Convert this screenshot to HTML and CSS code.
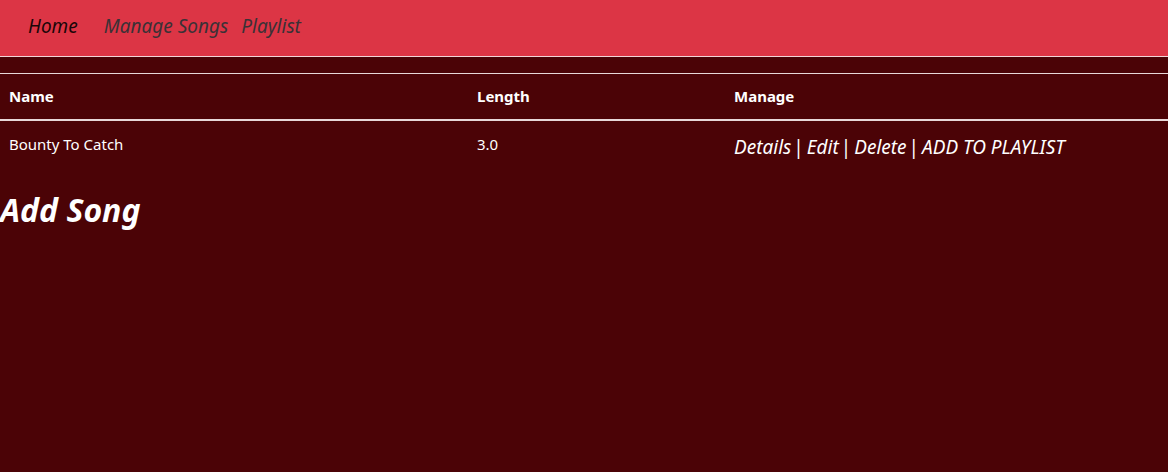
FILE: index.html
```html
<!DOCTYPE html>
<html>
<head>
<meta charset="utf-8">
<link rel="stylesheet" href="styles.css">
</head>
<body>
<nav class="navbar">
  <a class="nav-link active" href="#">Home</a>
  <a class="nav-link" href="#">Manage Songs</a>
  <a class="nav-link" href="#">Playlist</a>
</nav>
<main class="content">
  <table class="songs">
    <thead>
      <tr>
        <th class="col-name">Name</th>
        <th class="col-length">Length</th>
        <th class="col-manage">Manage</th>
      </tr>
    </thead>
    <tbody>
      <tr>
        <td>Bounty To Catch</td>
        <td>3.0</td>
        <td class="manage"><a href="#">Details</a><span class="sep">|</span><a href="#">Edit</a><span class="sep">|</span><a href="#">Delete</a><span class="sep">|</span><a href="#">ADD TO PLAYLIST</a></td>
      </tr>
    </tbody>
  </table>
  <h2 class="add-title">Add Song</h2>
</main>
</body>
</html>
```

FILE: styles.css
```css
html, body {
  margin: 0;
  padding: 0;
  height: 100%;
}
body {
  background: #4b0306;
  color: #fff;
  font-family: "Noto Sans", "Open Sans", sans-serif;
  font-size: 15px;
  line-height: 1.5;
}
.navbar {
  background: #dc3545;
  border-bottom: 1px solid #f2d6d8;
  display: flex;
  align-items: center;
  padding: 0 0 4px 28px;
  box-sizing: border-box;
  height: 57px;
}
.nav-link {
  font-style: italic;
  font-size: 19px;
  text-decoration: none;
  color: #3a3136;
  margin-right: 13px;
}
.nav-link.active {
  color: #1a0608;
  margin-right: 26px;
}
.content {
  padding-top: 16px;
}
.songs {
  width: 100%;
  border-collapse: collapse;
}
.songs th, .songs td {
  text-align: left;
  padding: 12px 9px;
  vertical-align: top;
}
.songs thead th {
  border-top: 1px solid #e8d8d8;
  border-bottom: 2px solid #e8d8d8;
  padding: 11px 9px 11px;
  font-weight: 700;
}
.col-name { width: 450px; }
.col-length { width: 239px; }
.songs td.manage {
  font-size: 19px;
  line-height: 27px;
  padding-top: 13px;
}
.manage a {
  color: #fff;
  font-style: italic;
  text-decoration: none;
}
.manage .sep {
  font-style: normal;
  margin: 0 3px 0 2px;
}
.add-title {
  margin: 18px 0 0 0;
  font-size: 32px;
  font-style: italic;
  font-weight: 700;
  line-height: 1.2;
}
```
